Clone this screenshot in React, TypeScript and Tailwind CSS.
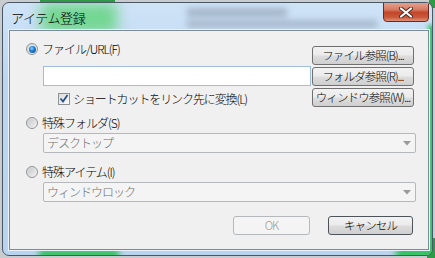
import React from "react";

const font = { fontFamily: '"Noto Sans CJK JP", "Noto Sans", sans-serif' };

function Radio({ checked, label }: { checked?: boolean; label: string }) {
  return (
    <div className="flex h-[14px] items-center gap-[4px] pl-[16px]">
      <div className="flex h-[12px] w-[12px] items-center justify-center rounded-full border border-[#8f9394] bg-[linear-gradient(135deg,#d5d6d8,#f5f5f5)]">
        {checked ? (
          <div className="h-[7px] w-[7px] rounded-full bg-[radial-gradient(circle_at_40%_35%,#8ad4ff_0%,#1f7fd8_40%,#0b3e8a_100%)]" />
        ) : (
          <div className="h-[8px] w-[8px] rounded-full bg-[linear-gradient(135deg,#c9cacc,#eeeeee)]" />
        )}
      </div>
      <span className="whitespace-nowrap text-[12px] font-light leading-none tracking-[-1px] text-black">{label}</span>
    </div>
  );
}

function Btn({ label, w, disabled, def }: { label: string; w: string; disabled?: boolean; def?: boolean }) {
  return (
    <div
      className={`${w} flex h-[19px] items-center justify-center whitespace-nowrap rounded-[3px] border text-[11.5px] font-light leading-none tracking-[-0.9px] ${
        disabled
          ? "border-[#b5b9bc] bg-[#f4f4f4] text-[#9a9a9a]"
          : `${def ? "border-[#4d5459]" : "border-[#707070]"} bg-[linear-gradient(#f2f2f2_0%,#ebebeb_48%,#dddddd_52%,#cfcfcf_100%)] text-black`
      }`}
    >
      {label}
    </div>
  );
}

function Combo({ label }: { label: string }) {
  return (
    <div className="ml-[17px] flex h-[20px] w-[373px] items-center justify-between rounded-[2px] border border-[#b5b9bc] bg-[#f4f4f4] pl-[3px] pr-[4px]">
      <span className="whitespace-nowrap text-[12px] font-light leading-none tracking-[-1px] text-[#6d6d6d]">{label}</span>
      <svg width="8" height="5" viewBox="0 0 8 5">
        <path d="M0 0h8L4 4.5z" fill="#9a9a9a" />
      </svg>
    </div>
  );
}

export default function App() {
  return (
    <div className="relative h-[258px] w-[435px] overflow-hidden bg-[#c9ccce]" style={font}>
      {/* background behind the glass */}
      <div className="absolute left-[40px] top-0 h-[4px] w-[75px] bg-[#2f9a45]" />
      <div className="absolute right-0 top-0 h-[8px] w-[6px] bg-[#2f9a45]" />
      <div className="absolute bottom-0 right-0 h-[20px] w-[8px] bg-[#2f9a45]" />

      <div className="relative ml-[2px] mt-[2px] flex h-[254px] w-[431px] flex-col overflow-hidden rounded-[7px] border border-[#4a5866] bg-[linear-gradient(#cfe3f7,#bcd6f1_30%,#b9d4ef)] pl-[6px] pr-[3px]">
        {/* glass glows */}
        <div className="pointer-events-none absolute left-[38px] top-[0px] h-[30px] w-[76px] bg-[#72d690] blur-[7px]" />
        <div className="pointer-events-none absolute bottom-[-4px] left-[36px] h-[10px] w-[80px] bg-[#2ec25a] blur-[3px]" />
        <div className="pointer-events-none absolute bottom-[-4px] right-[-4px] h-[12px] w-[40px] bg-[#2ec25a] blur-[3px]" />
        <div className="pointer-events-none absolute right-[-4px] top-[22px] h-[240px] w-[8px] bg-[#35c265] blur-[2px]" />
        <div className="pointer-events-none absolute left-[184px] top-[5px] h-[9px] w-[100px] bg-[#7f8c9c] opacity-50 blur-[3px]" />
        <div className="pointer-events-none absolute left-[184px] top-[17px] h-[8px] w-[190px] bg-[#7f8c9c] opacity-45 blur-[3px]" />

        {/* title bar */}
        <div className="relative flex h-[27px] items-center pl-[2px] pt-[2px]">
          <span className="text-[13px] font-light leading-none tracking-[-0.4px] text-black">アイテム登録</span>
        </div>
        <div className="absolute right-[3px] top-[-2px] flex h-[21px] w-[46px] items-center justify-center rounded-b-[4px] border border-[#6b2a1f] bg-[linear-gradient(#e8a694_0%,#d67a63_40%,#c3472b_55%,#c9583a_80%,#e0917a_100%)]">
          <svg width="14" height="11" viewBox="0 0 14 11" className="mt-[1px]">
            <path d="M2 1.5L12 9.5M12 1.5L2 9.5" stroke="#4a2a24" strokeWidth="4" strokeLinecap="round" />
            <path d="M2 1.5L12 9.5M12 1.5L2 9.5" stroke="#ffffff" strokeWidth="2.2" strokeLinecap="round" />
          </svg>
        </div>

        {/* client area */}
        <div className="relative h-[220px] w-[420px] border border-[#7d8b99] bg-[#f0f0f0] shadow-[0_0_0_1px_#e8f2fc]">
          <div className="flex h-[78px]">
            <div className="flex w-[286px] flex-col pt-[11px]">
              <Radio checked label="ファイル/URL(F)" />
              <div className="ml-[33px] mt-[10px] h-[20px] w-[268px] border border-[#9fbde0] bg-white" />
              <div className="ml-[48px] mt-[6px] flex h-[13px] items-center gap-[3px]">
                <div className="flex h-[12px] w-[12px] items-center justify-center border border-[#8f9394] bg-[linear-gradient(135deg,#dcdcdc,#fafafa)]">
                  <svg width="10" height="9" viewBox="0 0 10 9">
                    <path d="M1.5 4.5L4 7.5L8.5 1" stroke="#2a4f8e" strokeWidth="1.8" fill="none" />
                  </svg>
                </div>
                <span className="whitespace-nowrap text-[12px] font-light leading-none tracking-[-1.1px] text-black">ショートカットをリンク先に変換(L)</span>
              </div>
            </div>
            <div className="ml-[16px] flex flex-col gap-[2px] pt-[15px]">
              <Btn w="w-[102px]" label="ファイル参照(B)..." />
              <Btn w="w-[102px]" label="フォルダ参照(R)..." />
              <Btn w="w-[102px]" label="ウィンドウ参照(W)..." />
            </div>
          </div>

          <div className="mt-[7px]">
            <Radio label="特殊フォルダ(S)" />
          </div>
          <div className="mt-[3px] pl-[16px]">
            <Combo label="デスクトップ" />
          </div>
          <div className="mt-[12px]">
            <Radio label="特殊アイテム(I)" />
          </div>
          <div className="mt-[3px] pl-[16px]">
            <Combo label="ウィンドウロック" />
          </div>

          <div className="mt-[14px] flex justify-end gap-[18px] pr-[15px]">
            <Btn w="w-[77px]" disabled label="OK" />
            <Btn w="w-[85px]" def label="キャンセル" />
          </div>
        </div>
      </div>
    </div>
  );
}
